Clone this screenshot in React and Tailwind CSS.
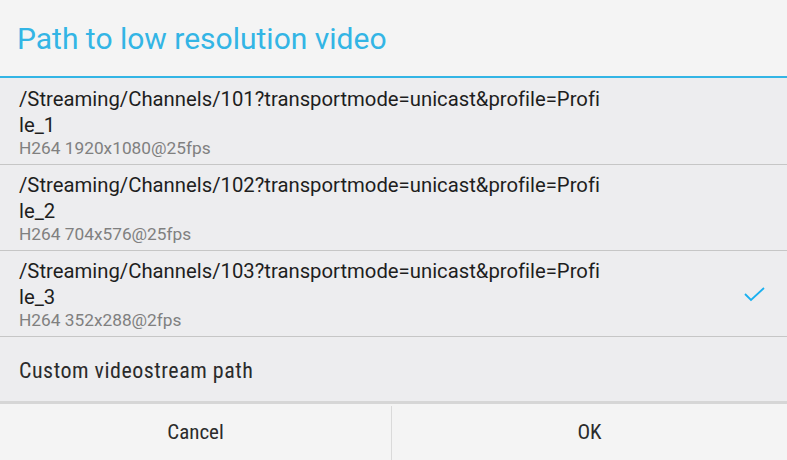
import React from "react";

const streams = [
  { id: "101", profile: "le_1", info: "H264 1920x1080@25fps", checked: false },
  { id: "102", profile: "le_2", info: "H264 704x576@25fps", checked: false },
  { id: "103", profile: "le_3", info: "H264 352x288@2fps", checked: true },
];

const condensed = "font-['Roboto_Condensed','Liberation_Sans_Narrow','DejaVu_Sans_Condensed',sans-serif]";

const App = () => {
  return (
    <div className="w-[787px] h-[460px] bg-[#f4f4f4] font-['Roboto',sans-serif] [font-variant-ligatures:none] overflow-hidden flex flex-col">
      <div className="h-[76px] shrink-0 flex items-center px-[17px] text-[30px] text-[#33b5e5]">
        Path to low resolution video
      </div>
      <div className="h-[2px] shrink-0 bg-[#33b5e5]"></div>

      <div className="bg-[#ededef] flex flex-col pt-[1px] shrink-0">
        {streams.map((s) => (
          <div
            key={s.id}
            className="h-[86px] border-b border-[#c6c6c6] flex items-center pl-[19px] pr-[20px]"
          >
            <div className="flex-1 flex flex-col">
              <span className="text-[20.3px] leading-[27px] text-[#1e1e1e]">
                /Streaming/Channels/{s.id}?transportmode=unicast&amp;profile=Profi
              </span>
              <span className="text-[20.3px] leading-[27px] text-[#1e1e1e] -mt-[1px]">
                {s.profile}
              </span>
              <span className="text-[17.3px] leading-[18px] text-[#808080]">
                {s.info}
              </span>
            </div>
            {s.checked && (
              <svg width="24" height="18" viewBox="0 0 24 18" className="mt-[4px]">
                <polyline
                  points="2,7 8,13 21,1"
                  fill="none"
                  stroke="#1ab0f0"
                  strokeWidth="1.8"
                />
              </svg>
            )}
          </div>
        ))}
        <div className={`h-[64px] flex items-center pl-[19px] pt-[3px] text-[22px] tracking-[0.5px] text-[#2b2b2b] ${condensed}`}>
          Custom videostream path
        </div>
      </div>

      <div className="h-[3px] shrink-0 bg-[#d6d6d6]"></div>
      <div className={`flex-1 flex pt-[2px] text-[21px] text-[#2b2b2b] ${condensed}`}>
        <div className="w-[392px] flex items-center justify-center border-r border-[#dadada]">
          Cancel
        </div>
        <div className="flex-1 flex items-center justify-center">OK</div>
      </div>
    </div>
  );
};

export default App;
